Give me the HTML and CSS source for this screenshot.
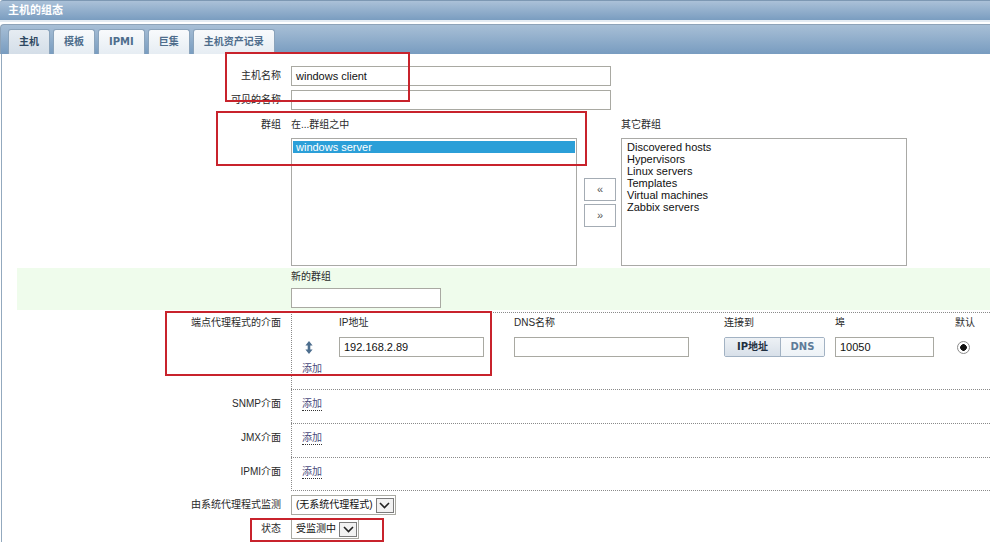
FILE: index.html
```html
<!DOCTYPE html>
<html>
<head>
<meta charset="utf-8">
<title>主机的组态</title>
<link rel="stylesheet" href="styles.css">
</head>
<body>
<div class="page">
  <div class="titlebar">主机的组态</div>
  <div class="tabbar">
    <div class="tab active">主机</div>
    <div class="tab">模板</div>
    <div class="tab">IPMI</div>
    <div class="tab">巨集</div>
    <div class="tab">主机资产记录</div>
  </div>
  <div class="content">
    <div class="row simple">
      <div class="lbl">主机名称</div>
      <div class="val"><div class="input w320">windows client</div></div>
    </div>
    <div class="row simple">
      <div class="lbl">可见的名称</div>
      <div class="val"><div class="input w320"></div></div>
    </div>
    <div class="row group">
      <div class="lbl">群组</div>
      <div class="val groups">
        <div class="gcol">
          <div class="caption">在...群组之中</div>
          <div class="listbox">
            <div class="item selected">windows server</div>
          </div>
        </div>
        <div class="movebtns">
          <div class="mbtn">«</div>
          <div class="mbtn">»</div>
        </div>
        <div class="gcol right">
          <div class="caption">其它群组</div>
          <div class="listbox">
            <div class="item">Discovered hosts</div>
            <div class="item">Hypervisors</div>
            <div class="item">Linux servers</div>
            <div class="item">Templates</div>
            <div class="item">Virtual machines</div>
            <div class="item">Zabbix servers</div>
          </div>
        </div>
      </div>
    </div>
    <div class="row newgroup">
      <div class="lbl"></div>
      <div class="val">
        <div class="caption">新的群组</div>
        <div class="input w150"></div>
      </div>
    </div>
    <div class="row iface agent">
      <div class="lbl">端点代理程式的介面</div>
      <div class="val">
        <div class="igrid">
          <div></div>
          <div class="ihead">IP地址</div>
          <div class="ihead">DNS名称</div>
          <div class="ihead">连接到</div>
          <div class="ihead">埠</div>
          <div class="ihead">默认</div>
          <div class="icell move">
            <svg width="8" height="13" viewBox="0 0 8 13"><path d="M4 0 L7.6 4.4 H5.3 V8.6 H7.6 L4 13 L0.4 8.6 H2.7 V4.4 H0.4 Z" fill="#4d6e8e"/></svg>
          </div>
          <div class="icell"><div class="input w145">192.168.2.89</div></div>
          <div class="icell"><div class="input w175"></div></div>
          <div class="icell">
            <div class="conn"><span class="on">IP地址</span><span class="off">DNS</span></div>
          </div>
          <div class="icell"><div class="input w99">10050</div></div>
          <div class="icell"><div class="radio"></div></div>
        </div>
        <span class="addlink">添加</span>
      </div>
    </div>
    <div class="row iface">
      <div class="lbl">SNMP介面</div>
      <div class="val"><span class="addlink">添加</span></div>
    </div>
    <div class="row iface">
      <div class="lbl">JMX介面</div>
      <div class="val"><span class="addlink">添加</span></div>
    </div>
    <div class="row iface last">
      <div class="lbl">IPMI介面</div>
      <div class="val"><span class="addlink">添加</span></div>
    </div>
    <div class="row sel">
      <div class="lbl">由系统代理程式监测</div>
      <div class="val">
        <div class="select"><span class="stext">(无系统代理程式)</span><span class="sarrow"><svg width="11" height="7" viewBox="0 0 11 7"><path d="M1 1 L5.5 5.5 L10 1" fill="none" stroke="#222" stroke-width="1.6"/></svg></span></div>
      </div>
    </div>
    <div class="row sel">
      <div class="lbl">状态</div>
      <div class="val">
        <div class="select"><span class="stext">受监测中</span><span class="sarrow"><svg width="11" height="7" viewBox="0 0 11 7"><path d="M1 1 L5.5 5.5 L10 1" fill="none" stroke="#222" stroke-width="1.6"/></svg></span></div>
      </div>
    </div>
  </div>
  <div class="mark m1"></div>
  <div class="mark m2"></div>
  <div class="mark m3"></div>
  <div class="mark m4"></div>
</div>
</body>
</html>
```
FILE: styles.css
```css
html, body {
  margin: 0;
  padding: 0;
  background: #ffffff;
}
body {
  font-family: "Liberation Sans", "Noto Sans CJK SC", sans-serif;
  font-size: 10px;
  color: #2a2a2a;
}
.page {
  position: relative;
  width: 990px;
  height: 542px;
  overflow: hidden;
}
.titlebar {
  height: 19px;
  border-top: 1px solid #7d98b3;
  border-bottom: 2px solid #e4ebf2;
  border-top-left-radius: 3px;
  background: linear-gradient(#abc1d8, #7a9dc0);
  color: #ffffff;
  font-weight: bold;
  font-size: 11px;
  line-height: 19px;
  padding-left: 8px;
}
.tabbar {
  margin-top: 2px;
  height: 29px;
  border-top: 1px solid #8ea3b8;
  border-left: 1px solid #8ea3b8;
  border-top-left-radius: 4px;
  background: linear-gradient(#a8bfd6, #789cc0);
  display: flex;
  align-items: flex-end;
  gap: 3px;
  padding-left: 7px;
}
.tab {
  height: 25px;
  box-sizing: border-box;
  border: 1px solid #8aa3bb;
  border-bottom: none;
  border-radius: 3px 3px 0 0;
  background: linear-gradient(#f8fafc, #e6edf3);
  color: #4e6d8c;
  font-family: "DejaVu Sans", "Noto Sans CJK SC", sans-serif;
  font-weight: bold;
  font-size: 10px;
  line-height: 24px;
  padding: 0 10px;
}
.tab.active {
  background: linear-gradient(#e6ecf2, #d4dee8);
  color: #2e4862;
}
.content {
  margin-left: 1px;
  border-left: 1px solid #93a9be;
  padding-top: 10px;
  height: 600px;
}
.row {
  display: flex;
  margin-left: 15px;
}
.lbl {
  flex: 0 0 274px;
  box-sizing: border-box;
  padding-right: 10px;
  text-align: right;
  line-height: 14px;
  color: #2a2a2a;
}
.val {
  flex: 1;
  min-width: 0;
}
.input {
  height: 20px;
  box-sizing: border-box;
  border: 1px solid #a9a9a2;
  background: #ffffff;
  font-size: 11px;
  line-height: 18px;
  padding-left: 4px;
  color: #111;
}
.w320 { width: 320px; }
.w150 { width: 150px; }
.w145 { width: 145px; }
.w175 { width: 175px; }
.w99 { width: 99px; }

.row.simple { height: 24px; }
.row.simple .lbl { line-height: 24px; }
.row.simple .input { margin-top: 2px; }

.row.group { padding-bottom: 2px; }
.row.group .lbl { padding-top: 6px; }
.groups {
  display: flex;
  align-items: flex-start;
}
.caption {
  line-height: 14px;
  height: 14px;
}
.gcol .caption { margin-top: 6px; }
.listbox {
  margin-top: 6px;
  width: 286px;
  height: 128px;
  box-sizing: border-box;
  border: 1px solid #a9a9a6;
  padding: 2px 1px;
  font-size: 11px;
  line-height: 12px;
  color: #111;
}
.item {
  padding: 0 3px;
  height: 12px;
}
.item.selected {
  background: #2b9fd8;
  color: #ffffff;
}
.gcol.right { margin-left: 5px; }
.gcol.right .item { padding-left: 4px; }
.movebtns {
  margin-left: 7px;
  margin-top: 26px;
  height: 128px;
  display: flex;
  flex-direction: column;
  justify-content: center;
  gap: 3px;
}
.mbtn {
  width: 32px;
  height: 23px;
  box-sizing: border-box;
  border: 1px solid #a4acb4;
  background: #ffffff;
  color: #555;
  text-align: center;
  line-height: 20px;
  font-size: 11px;
}

.row.newgroup {
  background: #effcec;
  padding: 2px 0;
}
.row.newgroup .input { margin-top: 4px; }

.row.iface .val {
  border-left: 1px dotted #8a8a8a;
  border-top: 1px dotted #8a8a8a;
  padding: 7px 10px 12px 10px;
}
.row.iface .lbl { padding-top: 8px; }
.row.iface.last .val {
  border-bottom: 1px dotted #8a8a8a;
  padding-bottom: 11px;
}
.row.agent { margin-top: 2px; }
.row.agent .lbl { padding-top: 4px; }
.row.agent .val {
  padding: 3px 0 13px 0;
}
.igrid {
  display: grid;
  grid-template-columns: 47px 175px 210px 111px 120px auto;
  row-gap: 7px;
}
.ihead {
  line-height: 14px;
  color: #2a2a2a;
}
.icell {
  height: 20px;
  display: flex;
  align-items: center;
}
.icell.move { padding-left: 13px; }
.conn {
  display: flex;
  width: 101px;
  height: 20px;
  box-sizing: border-box;
  border: 1px solid #a2b2c3;
  border-radius: 2px;
  font-family: "DejaVu Sans", "Noto Sans CJK SC", sans-serif;
  font-weight: bold;
  font-size: 10px;
  line-height: 18px;
  overflow: hidden;
}
.conn .on {
  width: 55px;
  text-align: center;
  background: linear-gradient(#edf1f5, #d8e0e9);
  color: #1f2f40;
  border-right: 1px solid #a2b2c3;
}
.conn .off {
  flex: 1;
  text-align: center;
  background: linear-gradient(#f8fafc, #edf2f6);
  color: #5e7b98;
}
.radio {
  margin-left: 2px;
  width: 13px;
  height: 13px;
  box-sizing: border-box;
  border-radius: 50%;
  border: 1px solid #8c8c8c;
  background: radial-gradient(circle, #111 0, #111 3px, #ffffff 3.6px);
}
.addlink {
  display: inline-block;
  color: #4a4a7c;
  line-height: 13px;
  border-bottom: 1px dotted #333;
}
.row.agent .addlink {
  margin-left: 10px;
  margin-top: 5px;
}

.row.sel { height: 24px; }
.row.sel .lbl { line-height: 24px; padding-top: 2px; }
.select {
  margin-top: 4px;
  display: inline-flex;
  align-items: center;
  height: 20px;
  box-sizing: border-box;
  border: 1px solid #a9a9a2;
  padding: 0 1px 0 4px;
  color: #111;
}
.stext { line-height: 18px; }
.sarrow {
  margin-left: 3px;
  width: 18px;
  height: 15px;
  box-sizing: border-box;
  border: 1px solid #7b7b7b;
  background: #f2f2f2;
  display: flex;
  align-items: center;
  justify-content: center;
}

.mark {
  position: absolute;
  box-sizing: border-box;
  border: 2px solid #c8232c;
}
.m1 { left: 225px; top: 52px; width: 185px; height: 50px; }
.m2 { left: 216px; top: 111px; width: 371px; height: 55px; }
.m3 { left: 165px; top: 311px; width: 327px; height: 65px; }
.m4 { left: 250px; top: 518px; width: 134px; height: 24px; }
```
